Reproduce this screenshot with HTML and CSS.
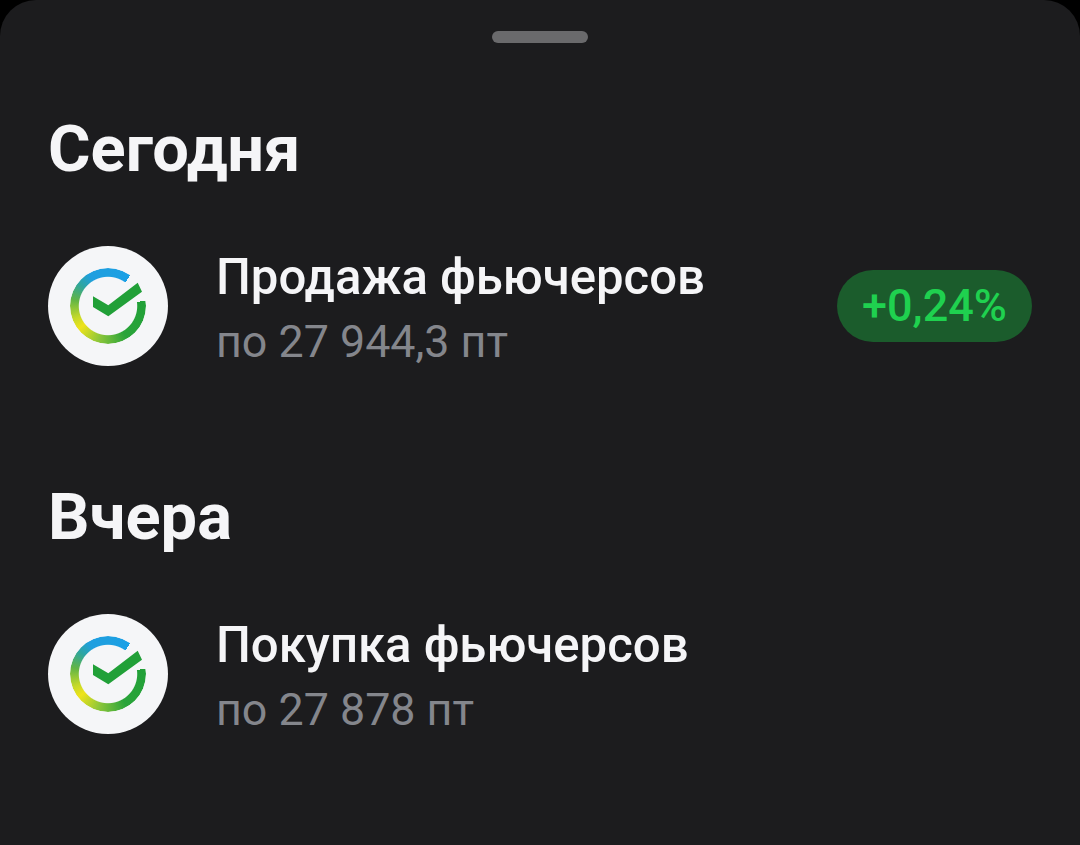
FILE: index.html
```html
<!DOCTYPE html>
<html lang="ru">
<head>
  <meta charset="UTF-8" />
  <title>Операции</title>
  <link rel="stylesheet" href="styles.css">
</head>
<body>
  <div class="sheet">
    <div class="handle"></div>

    <h2 class="day-title first">Сегодня</h2>
    <div class="deal">
      <div class="logo">
        <div class="logo-ring"></div>
        <svg class="logo-check" viewBox="0 0 120 120"><polygon points="45,50.2 60.3,59.2 89.7,36.8 94,45.7 60.3,70.2 45,61"/></svg>
      </div>
      <div class="deal-info">
        <div class="deal-name">Продажа фьючерсов</div>
        <div class="deal-price">по 27 944,3 пт</div>
      </div>
      <div class="deal-result">+0,24%</div>
    </div>

    <h2 class="day-title second">Вчера</h2>
    <div class="deal">
      <div class="logo">
        <div class="logo-ring"></div>
        <svg class="logo-check" viewBox="0 0 120 120"><polygon points="45,50.2 60.3,59.2 89.7,36.8 94,45.7 60.3,70.2 45,61"/></svg>
      </div>
      <div class="deal-info">
        <div class="deal-name">Покупка фьючерсов</div>
        <div class="deal-price">по 27 878 пт</div>
      </div>
    </div>
  </div>
</body>
</html>
```

FILE: styles.css
```css
html, body {
  margin: 0;
  padding: 0;
  background: #000;
}

body {
  font-family: Roboto, 'Liberation Sans', sans-serif;
  width: 1080px;
  height: 845px;
  overflow: hidden;
}

.sheet {
  box-sizing: border-box;
  height: 845px;
  padding: 31px 48px 0;
  background: #1c1c1e;
  border-radius: 36px 36px 0 0;
}

.handle {
  width: 96px;
  height: 12px;
  margin: 0 auto;
  border-radius: 6px;
  background: #6a6a6c;
}

.day-title {
  margin: 0;
  color: #f5f5f7;
  font-size: 65px;
  font-weight: 700;
  line-height: 66px;
}

.day-title.first {
  margin-top: 73px;
  margin-bottom: 64px;
}

.day-title.second {
  margin-top: 118px;
  margin-bottom: 64px;
}

.deal {
  display: flex;
  align-items: center;
  height: 120px;
}

.logo {
  display: grid;
  place-items: center;
  flex: none;
  width: 120px;
  height: 120px;
  border-radius: 50%;
  background: #f5f6f8;
}

.logo-ring,
.logo-check {
  grid-area: 1 / 1;
}

.logo-ring {
  width: 76px;
  height: 76px;
  border-radius: 50%;
  background: conic-gradient(
    #1e9fe0 0deg, #1aa0e6 36deg,
    transparent 36deg, transparent 82deg,
    #21a038 82deg, #2aa43a 150deg, #8cc63a 195deg,
    #efe31a 232deg, #c4d92a 250deg, #62b545 280deg,
    #2ea5a0 308deg, #1e9fe0 330deg, #1e9fe0 360deg
  );
  -webkit-mask: radial-gradient(circle, transparent 28.7px, #000 29.7px);
  mask: radial-gradient(circle, transparent 28.7px, #000 29.7px);
}

.logo-check {
  width: 120px;
  height: 120px;
  fill: #21a038;
}

.deal-info {
  margin-left: 49px;
  flex: 1;
}

.deal-name {
  margin-top: 2px;
  margin-left: -1px;
  color: #f5f5f7;
  font-size: 49.1px;
  font-weight: 500;
  line-height: 58px;
}

.deal-price {
  margin-left: -1px;
  margin-top: 12px;
  color: #84868c;
  font-size: 44.8px;
  line-height: 48px;
}

.deal-result {
  width: 195px;
  height: 72px;
  box-sizing: border-box;
  border-radius: 36px;
  background: #1b5c2c;
  color: #1fd14f;
  font-size: 45px;
  font-weight: 500;
  line-height: 72px;
  text-align: center;
}
```
